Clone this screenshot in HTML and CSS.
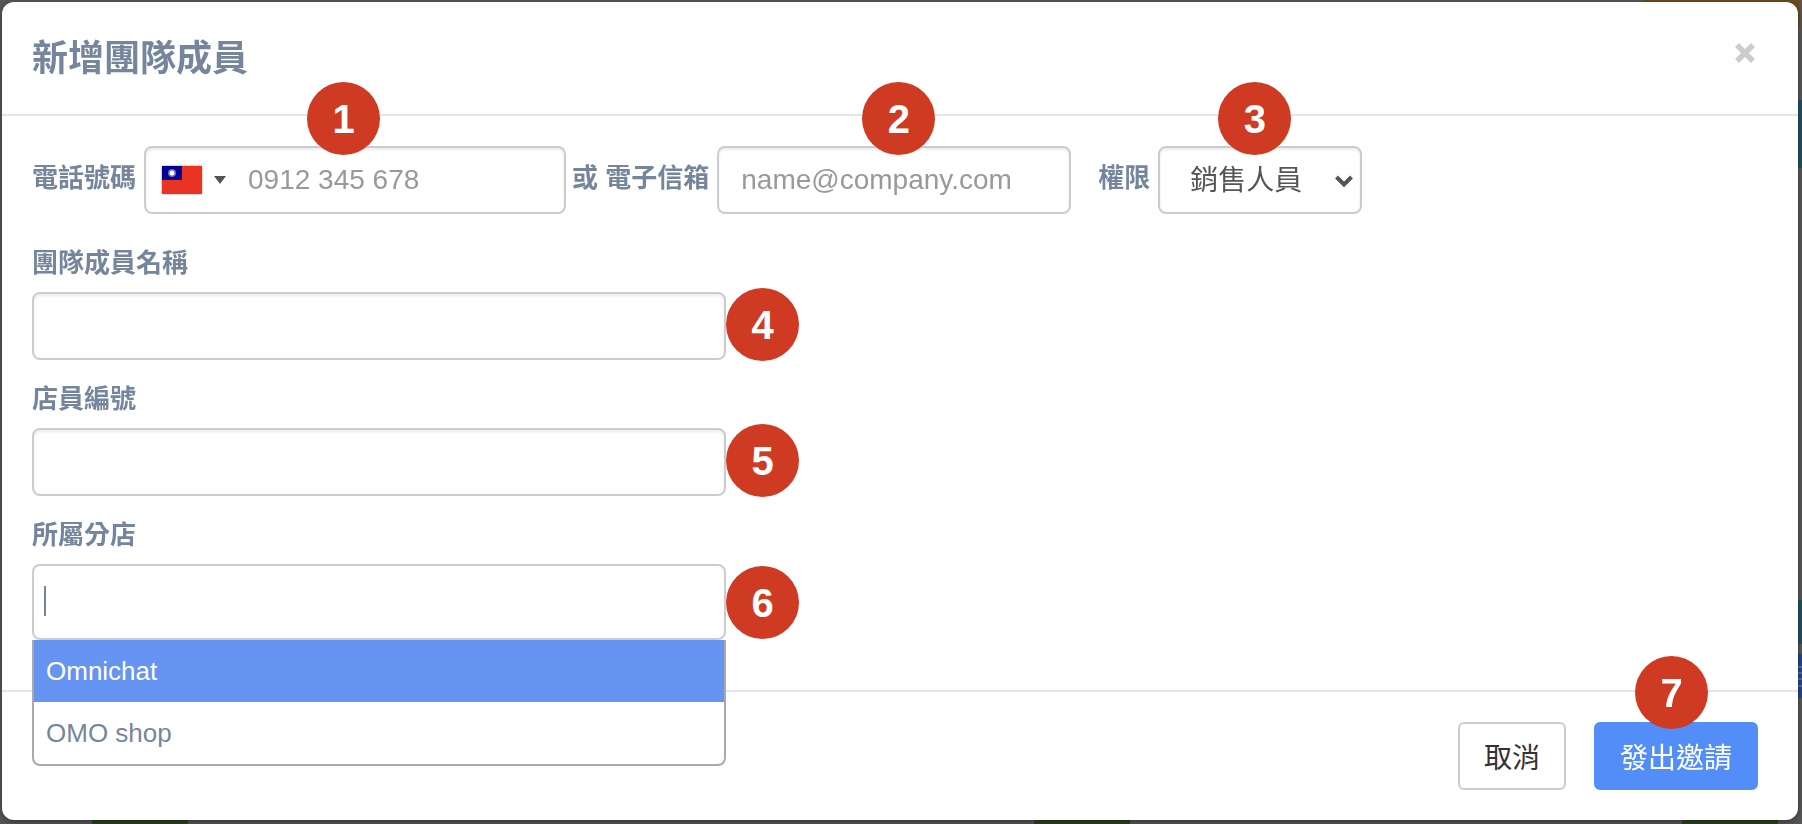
FILE: index.html
```html
<!DOCTYPE html>
<html lang="zh-Hant">
<head>
<meta charset="utf-8">
<meta name="viewport" content="width=device-width, initial-scale=1">
<title>新增團隊成員</title>
<link rel="stylesheet" href="styles.css">
</head>
<body>
<div class="backdrop" aria-hidden="true">
  <i class="scrap scrap-orange"></i>
  <i class="scrap scrap-teal"></i>
  <i class="scrap scrap-teal scrap-teal-low"></i>
  <i class="scrap scrap-blue"></i>
  <i class="scrap scrap-green scrap-green-a"></i>
  <i class="scrap scrap-green scrap-green-b"></i>
  <i class="scrap scrap-green scrap-green-c"></i>
</div>
<form class="modal" role="dialog" aria-labelledby="title">
  <header class="modal-header">
    <h1 class="modal-title" id="title">新增團隊成員</h1>
    <button class="close" type="button" aria-label="關閉">
      <svg viewBox="0 0 22 22" width="22" height="22"><path d="M3 3L19 19M19 3L3 19" stroke="currentColor" stroke-width="5.5"/></svg>
    </button>
  </header>

  <div class="modal-body">
    <div class="contact-row">
      <label class="label" for="phone">電話號碼</label>
      <div class="control phone">
        <button class="country" type="button" aria-label="國碼">
          <svg class="flag" viewBox="0 0 40 28" width="40" height="28">
            <path fill="#e93423" d="M0 0h40v28H0z"/>
            <path fill="#000095" d="M0 0h20v14H0z"/>
            <circle cx="10" cy="7" r="4" fill="#6c6cc4"/>
            <circle cx="10" cy="7" r="2.5" fill="#fff"/>
          </svg>
          <svg class="caret" viewBox="0 0 12 8" width="12" height="8"><path fill="#555" d="M0 0h12L6 8z"/></svg>
        </button>
        <input class="bare-input" id="phone" type="tel" placeholder="0912 345 678">
        <span class="badge badge-phone">1</span>
      </div>
      <label class="label label-or" for="email">或 電子信箱</label>
      <div class="control email">
        <input class="bare-input" id="email" type="email" placeholder="name@company.com">
        <span class="badge badge-top">2</span>
      </div>
      <label class="label label-role" for="role">權限</label>
      <div class="control role">
        <select class="role-select" id="role"><option>銷售人員</option></select>
        <svg class="chevron" viewBox="0 0 18 12" width="18" height="12"><path d="M1.500 2l7.500 7.500 7.500-7.500" fill="none" stroke="#555" stroke-width="4"/></svg>
        <span class="badge badge-role">3</span>
      </div>
    </div>

    <div class="field">
      <label class="label" for="name">團隊成員名稱</label>
      <div class="control">
        <input class="bare-input" id="name" type="text">
        <span class="badge badge-side">4</span>
      </div>
    </div>
    <div class="field">
      <label class="label" for="number">店員編號</label>
      <div class="control">
        <input class="bare-input" id="number" type="text">
        <span class="badge badge-side">5</span>
      </div>
    </div>
    <div class="field">
      <label class="label" for="store">所屬分店</label>
      <div class="control combo">
        <input class="bare-input" id="store" type="text" role="combobox" aria-expanded="true" aria-controls="stores">
        <span class="text-cursor"></span>
        <span class="badge badge-side">6</span>
        <ul class="options" id="stores" role="listbox">
          <li class="option option-active" role="option" aria-selected="true">Omnichat</li>
          <li class="option" role="option" aria-selected="false">OMO shop</li>
        </ul>
      </div>
    </div>
  </div>

  <footer class="modal-footer">
    <button class="button" type="button">取消</button>
    <button class="button button-primary" type="submit">發出邀請<span class="badge badge-submit">7</span></button>
  </footer>
</form>
</body>
</html>
```

FILE: styles.css
```css
* { box-sizing: border-box; }

body {
  margin: 0;
  padding: 2px 4px 4px 2px;
  background: #585758;
  color: #75869c;
  font-family: "Liberation Sans", "Noto Sans CJK TC", sans-serif;
  font-size: 26px;
}

button, input, select { font: inherit; color: inherit; }

/* Dimmed page behind the dialog */
.backdrop { position: fixed; inset: 0; overflow: hidden; }
.scrap { position: absolute; }
.scrap-orange { top: 0; right: 2px; width: 156px; height: 30px; border-radius: 0 0 6px 6px; background: #6b4b21; }
.scrap-teal { top: 100px; right: 0; width: 6px; height: 68px; background: #235060; }
.scrap-teal-low { top: 600px; height: 44px; }
.scrap-blue {
  top: 654px;
  right: 0;
  width: 6px;
  height: 44px;
  background: linear-gradient(#24468a 12px, #5a6c94 12px 14px, #24468a 14px 18px, #5a6c94 18px 20px, #24468a 20px 24px, #5a6c94 24px 26px, #24468a 26px 31px, #5a6c94 31px 33px, #24468a 33px);
}
.scrap-green { bottom: 0; height: 6px; width: 96px; background: #2a4420; }
.scrap-green-a { left: 92px; }
.scrap-green-b { left: 1034px; }
.scrap-green-c { left: 1682px; }

.modal {
  position: relative;
  background: #fff;
  border-radius: 12px;
  box-shadow: 0 2px 6px rgba(0, 0, 0, .4);
}

.modal-header {
  display: flex;
  justify-content: space-between;
  align-items: flex-start;
  padding: 31px 42px 29px 30px;
  border-bottom: 2px solid #e5e5e5;
}
.modal-title { margin: 0; font-size: 36px; line-height: 52px; font-weight: 700; }
.close {
  display: flex;
  margin-top: 9px;
  padding: 0;
  border: 0;
  background: none;
  color: #ccc;
}

.modal-body { padding: 30px 30px 50px; }

.label { display: block; font-weight: 700; line-height: 36px; white-space: nowrap; }

.control {
  position: relative;
  display: flex;
  align-items: center;
  height: 68px;
  border: 2px solid #ccc;
  border-radius: 8px;
  background: #fff;
  box-shadow: inset 0 2px 3px rgba(0, 0, 0, .08);
}
.bare-input {
  flex: 1;
  min-width: 0;
  height: 100%;
  padding: 0 22px;
  border: 0;
  outline: 0;
  background: transparent;
  font-size: 28px;
}
.bare-input::placeholder { color: #999; opacity: 1; }

.contact-row { display: flex; align-items: center; margin-bottom: 31px; }
.contact-row .label { padding-bottom: 4px; margin-right: 8px; }
.contact-row .label-or { margin-left: 6px; }
.contact-row .label-role { margin-left: 27px; }
.phone { width: 422px; }
.email { width: 354px; }
.role { width: 204px; }

.country {
  display: flex;
  align-items: center;
  gap: 12px;
  padding: 0 0 0 16px;
  border: 0;
  background: none;
}
.flag { box-shadow: 0 0 2px #888; }

.role-select {
  width: 100%;
  height: 100%;
  padding: 0 30px;
  border: 0;
  outline: 0;
  appearance: none;
  background: transparent;
  color: #555;
  font-size: 28px;
}
.chevron { position: absolute; right: 7px; top: 27px; pointer-events: none; }

.field { width: 694px; max-width: 100%; margin-bottom: 21px; }
.field .label { margin-bottom: 11px; }
.field:last-child { margin-bottom: 0; }

.combo { height: 76px; box-shadow: none; }
.text-cursor { position: absolute; left: 10px; top: 20px; width: 2px; height: 30px; background: #75869c; }
.options {
  position: absolute;
  z-index: 1;
  top: calc(100% + 2px);
  left: -2px;
  right: -2px;
  margin: 0;
  padding: 0;
  list-style: none;
  border: 2px solid #aaa;
  border-top: 0;
  border-radius: 0 0 8px 8px;
  background: #fff;
}
.option { padding: 0 12px; line-height: 62px; }
.option:last-child { border-radius: 0 0 6px 6px; }
.option-active { background: #6694f3; color: #fff; }

.modal-footer {
  display: flex;
  justify-content: flex-end;
  gap: 28px;
  padding: 30px 40px;
  border-top: 2px solid #e5e5e5;
}
.button {
  position: relative;
  height: 68px;
  padding: 0 24px;
  border: 2px solid #ccc;
  border-radius: 6px;
  background: #fff;
  color: #333;
  font-size: 28px;
}
.button-primary { border-color: #538df8; background: #538df8; color: #fff; }

.badge {
  position: absolute;
  width: 73px;
  height: 73px;
  border-radius: 50%;
  background: #cf3a22;
  color: #fff;
  font-size: 40px;
  font-weight: 700;
  line-height: 74px;
  text-align: center;
}
.badge-phone { left: 161px; top: -66px; }
.badge-top { left: 143px; top: -66px; }
.badge-role { left: 58px; top: -66px; }
.badge-side { left: calc(100% + 2px); top: -6px; }
.combo .badge-side { top: 0; }
.badge-submit { right: 48px; top: -68px; }
```
